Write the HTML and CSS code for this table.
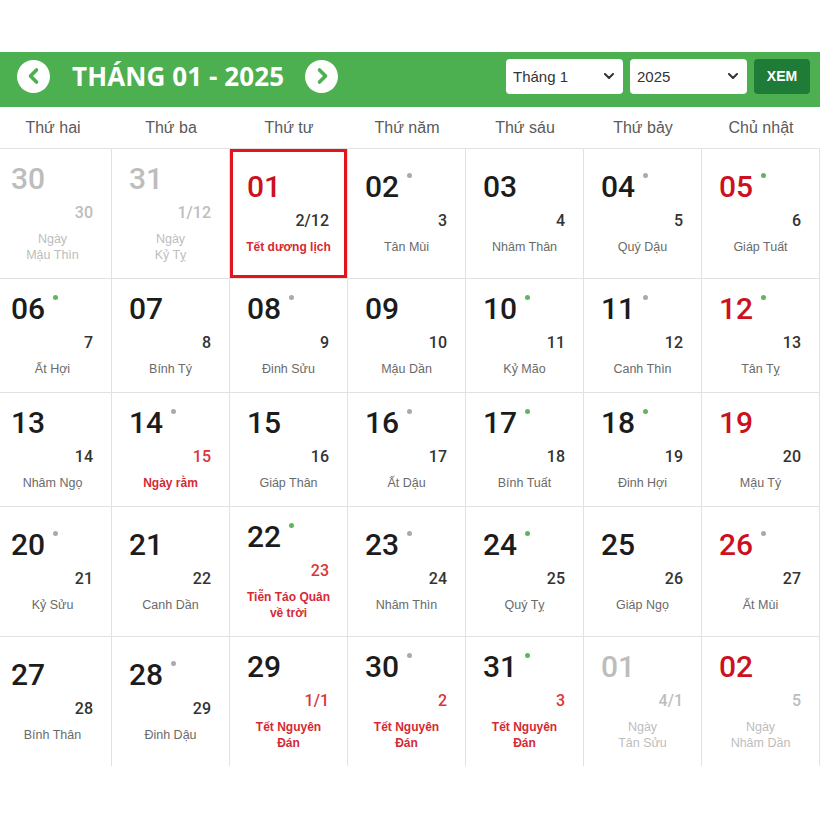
FILE: index.html
```html
<!DOCTYPE html>
<html lang="vi">
<head>
<meta charset="utf-8">
<title>Lịch tháng 01 - 2025</title>
<link rel="stylesheet" href="styles.css">
</head>
<body>
<div class="page">
  <header class="bar">
    <div class="nav">
      <span class="circle"><svg viewBox="0 0 32 32" width="32" height="32"><path d="M18.5 10 L12.5 16 L18.5 22" /></svg></span>
      <h1 class="title">THÁNG 01 - 2025</h1>
      <span class="circle"><svg viewBox="0 0 32 32" width="32" height="32"><path d="M13.5 10 L19.5 16 L13.5 22" /></svg></span>
    </div>
    <div class="controls">
      <div class="select"><span>Tháng 1</span><svg viewBox="0 0 10 6" width="10" height="6"><path d="M1 1 L5 5 L9 1" /></svg></div>
      <div class="select"><span>2025</span><svg viewBox="0 0 10 6" width="10" height="6"><path d="M1 1 L5 5 L9 1" /></svg></div>
      <div class="btn">XEM</div>
    </div>
  </header>

  <div class="weekdays">
    <div>Thứ hai</div><div>Thứ ba</div><div>Thứ tư</div><div>Thứ năm</div><div>Thứ sáu</div><div>Thứ bảy</div><div>Chủ nhật</div>
  </div>

  <div class="grid">
    <!-- row 1 -->
    <div class="cell other"><div class="num">30</div><div class="lunar">30</div><div class="can">Ngày<br>Mậu Thìn</div></div>
    <div class="cell other"><div class="num">31</div><div class="lunar">1/12</div><div class="can">Ngày<br>Kỷ Tỵ</div></div>
    <div class="cell sel"><div class="num red">01</div><div class="lunar">2/12</div><div class="can ev">Tết dương lịch</div></div>
    <div class="cell"><div class="num">02<i class="dot"></i></div><div class="lunar">3</div><div class="can">Tân Mùi</div></div>
    <div class="cell"><div class="num">03</div><div class="lunar">4</div><div class="can">Nhâm Thân</div></div>
    <div class="cell"><div class="num">04<i class="dot"></i></div><div class="lunar">5</div><div class="can">Quý Dậu</div></div>
    <div class="cell"><div class="num red">05<i class="dot g"></i></div><div class="lunar">6</div><div class="can">Giáp Tuất</div></div>
    <!-- row 2 -->
    <div class="cell"><div class="num">06<i class="dot g"></i></div><div class="lunar">7</div><div class="can">Ất Hợi</div></div>
    <div class="cell"><div class="num">07</div><div class="lunar">8</div><div class="can">Bính Tý</div></div>
    <div class="cell"><div class="num">08<i class="dot"></i></div><div class="lunar">9</div><div class="can">Đinh Sửu</div></div>
    <div class="cell"><div class="num">09</div><div class="lunar">10</div><div class="can">Mậu Dần</div></div>
    <div class="cell"><div class="num">10<i class="dot g"></i></div><div class="lunar">11</div><div class="can">Kỷ Mão</div></div>
    <div class="cell"><div class="num">11<i class="dot"></i></div><div class="lunar">12</div><div class="can">Canh Thìn</div></div>
    <div class="cell"><div class="num red">12<i class="dot g"></i></div><div class="lunar">13</div><div class="can">Tân Tỵ</div></div>
    <!-- row 3 -->
    <div class="cell"><div class="num">13</div><div class="lunar">14</div><div class="can">Nhâm Ngọ</div></div>
    <div class="cell"><div class="num">14<i class="dot"></i></div><div class="lunar red">15</div><div class="can ev">Ngày rằm</div></div>
    <div class="cell"><div class="num">15</div><div class="lunar">16</div><div class="can">Giáp Thân</div></div>
    <div class="cell"><div class="num">16<i class="dot"></i></div><div class="lunar">17</div><div class="can">Ất Dậu</div></div>
    <div class="cell"><div class="num">17<i class="dot g"></i></div><div class="lunar">18</div><div class="can">Bính Tuất</div></div>
    <div class="cell"><div class="num">18<i class="dot g"></i></div><div class="lunar">19</div><div class="can">Đinh Hợi</div></div>
    <div class="cell"><div class="num red">19</div><div class="lunar">20</div><div class="can">Mậu Tý</div></div>
    <!-- row 4 -->
    <div class="cell"><div class="num">20<i class="dot"></i></div><div class="lunar">21</div><div class="can">Kỷ Sửu</div></div>
    <div class="cell"><div class="num">21</div><div class="lunar">22</div><div class="can">Canh Dần</div></div>
    <div class="cell"><div class="num">22<i class="dot g"></i></div><div class="lunar red">23</div><div class="can ev">Tiễn Táo Quân<br>về trời</div></div>
    <div class="cell"><div class="num">23<i class="dot"></i></div><div class="lunar">24</div><div class="can">Nhâm Thìn</div></div>
    <div class="cell"><div class="num">24<i class="dot g"></i></div><div class="lunar">25</div><div class="can">Quý Tỵ</div></div>
    <div class="cell"><div class="num">25</div><div class="lunar">26</div><div class="can">Giáp Ngọ</div></div>
    <div class="cell"><div class="num red">26<i class="dot"></i></div><div class="lunar">27</div><div class="can">Ất Mùi</div></div>
    <!-- row 5 -->
    <div class="cell last"><div class="num">27</div><div class="lunar">28</div><div class="can">Bính Thân</div></div>
    <div class="cell last"><div class="num">28<i class="dot"></i></div><div class="lunar">29</div><div class="can">Đinh Dậu</div></div>
    <div class="cell last"><div class="num">29</div><div class="lunar red">1/1</div><div class="can ev">Tết Nguyên<br>Đán</div></div>
    <div class="cell last"><div class="num">30<i class="dot"></i></div><div class="lunar red">2</div><div class="can ev">Tết Nguyên<br>Đán</div></div>
    <div class="cell last"><div class="num">31<i class="dot g"></i></div><div class="lunar red">3</div><div class="can ev">Tết Nguyên<br>Đán</div></div>
    <div class="cell last other"><div class="num">01</div><div class="lunar">4/1</div><div class="can">Ngày<br>Tân Sửu</div></div>
    <div class="cell last other"><div class="num red">02</div><div class="lunar">5</div><div class="can">Ngày<br>Nhâm Dần</div></div>
  </div>
</div>
</body>
</html>
```

FILE: styles.css
```css
* { box-sizing: border-box; }
html, body { margin: 0; padding: 0; background: #fff; }
body { font-family: "Liberation Sans", Arial, sans-serif; color: #222; }

.page {
  width: 820px;
  overflow: hidden;
  padding-top: 52px;
}

/* header bar */
.bar {
  height: 55px;
  background: #4caf50;
  display: flex;
  align-items: center;
  justify-content: space-between;
  padding: 0 10px 7px 17px;
}
.nav { display: flex; align-items: center; }
.circle {
  width: 33px; height: 33px;
  border-radius: 50%;
  background: #fff;
  display: flex; align-items: center; justify-content: center;
}
.circle svg path {
  fill: none; stroke: #4caf50; stroke-width: 3.6;
  stroke-linecap: round; stroke-linejoin: round;
}
.title {
  margin: 0 21px 0 22px;
  font-family: "Open Sans", sans-serif;
  font-weight: 700;
  font-size: 26px;
  line-height: 30px;
  color: #fff;
  letter-spacing: 0.1px;
}
.controls { display: flex; align-items: center; gap: 7px; }
.select {
  width: 117px; height: 35px;
  background: #fff;
  border-radius: 4px;
  display: flex; align-items: center; justify-content: space-between;
  padding: 0 9px 0 7px;
  font-size: 15px;
  color: #333;
}
.select svg path {
  fill: none; stroke: #333; stroke-width: 2;
  stroke-linecap: round; stroke-linejoin: round;
}
.btn {
  width: 56px; height: 35px;
  background: #1e7b38;
  border-radius: 4px;
  color: #fff;
  font-weight: 700;
  font-size: 14px;
  display: flex; align-items: center; justify-content: center;
}

/* weekday names */
.weekdays {
  width: 826px;
  margin-left: -6px;
  height: 41px;
  display: grid;
  grid-template-columns: repeat(7, 118px);
  align-items: center;
  text-align: center;
  font-size: 16px;
  color: #5a5a5a;
}

/* grid */
.grid {
  width: 826px;
  margin-left: -6px;
  display: grid;
  grid-template-columns: repeat(7, 118px);
  border-top: 1px solid #e2e2e2;
}
.cell {
  display: flex;
  flex-direction: column;
  justify-content: center;
  padding: 15px 18px 15px 17px;
  border-right: 1px solid #e2e2e2;
  border-bottom: 1px solid #e2e2e2;
}
.cell.last { border-bottom: none; }
.cell.sel { box-shadow: inset 0 0 0 3px #e3141e; }

.num {
  font-family: Roboto, sans-serif;
  font-weight: 500;
  font-size: 30px;
  line-height: 30px;
  color: #1c1c1c;
  margin-bottom: 10px;
  white-space: nowrap;
}
.num.red { color: #cc1020; }
.dot {
  display: inline-block;
  width: 5px; height: 5px;
  border-radius: 50%;
  background: #aaa;
  vertical-align: top;
  margin: 1px 0 0 8px;
}
.dot.g { background: #5cb85c; }

.lunar {
  font-family: Roboto, sans-serif;
  font-weight: 500;
  font-size: 16px;
  line-height: 18px;
  text-align: right;
  color: #333;
  margin-bottom: 9px;
}
.lunar.red { color: #d9343c; }

.can {
  text-align: center;
  font-size: 12.5px;
  line-height: 16px;
  color: #6a6a6a;
  margin-left: -1px;
  margin-right: -2px;
}
.can.ev { color: #d42a36; font-weight: 700; font-size: 12px; }

.other .num, .other .lunar, .other .can { color: #bdbdbd; }
.other .num.red { color: #cc1020; }
```
